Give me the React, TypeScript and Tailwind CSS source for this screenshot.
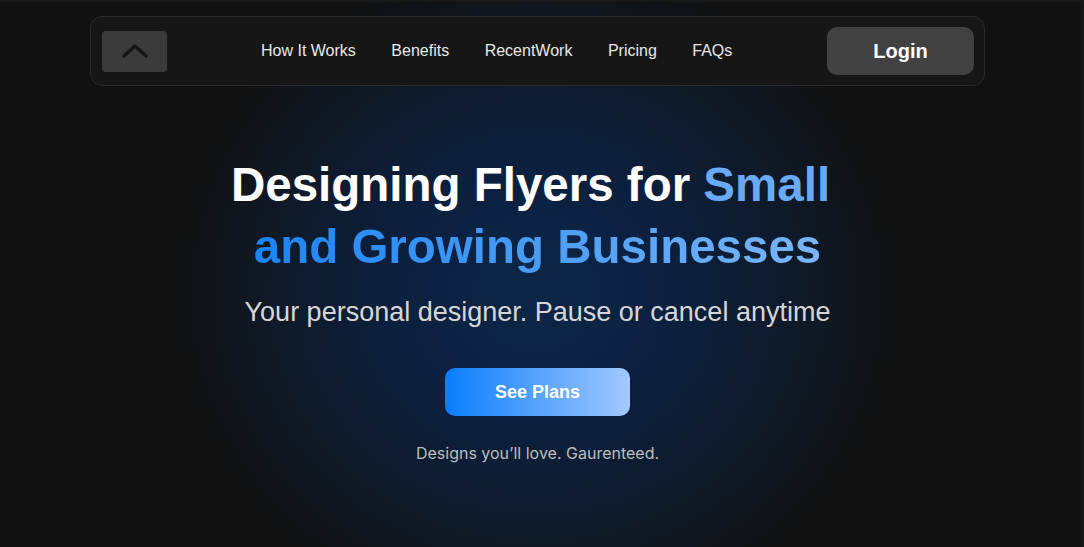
import React from "react";

export default function App() {
  const links = ["How It Works", "Benefits", "RecentWork", "Pricing", "FAQs"];
  return (
    <div
      className="relative w-full h-[547px] overflow-hidden bg-[#111111]"
      style={{ fontFamily: '"Liberation Sans", Arial, sans-serif' }}
    >
      <div className="absolute inset-0 pointer-events-none bg-[radial-gradient(ellipse_370px_340px_at_537px_295px,#0d2748_0%,#0c2040_35%,#0f1a29_70%,#111111_100%)]" />
      <div className="absolute top-0 left-0 right-0 h-[2px] bg-[#1a1a1a]" />
      <div className="absolute top-0 bottom-0 right-0 w-[3px] bg-[#171717]" />
      <div className="relative w-[1075px] flex flex-col items-center">
        <nav className="mt-[16px] w-[895px] h-[70px] rounded-[12px] border border-[#2a2a2a] bg-[#161616] flex items-center pl-[11px] pr-[10px]">
          <div className="w-[65px] h-[41px] rounded-[4px] bg-[#3b3b3b] flex items-center justify-center">
            <svg width="28" height="16" viewBox="0 0 28 16" fill="none">
              <path d="M3 13 L14 3 L25 13" stroke="#161616" strokeWidth="3.5" strokeLinecap="round" strokeLinejoin="round" />
            </svg>
          </div>
          <div className="flex items-center gap-[35.5px] ml-[94px] text-[16px] text-[#e8e8e8]">
            {links.map((l) => (
              <span key={l}>{l}</span>
            ))}
          </div>
          <button className="ml-auto w-[147px] h-[48px] rounded-[10px] bg-[#414141] text-white font-bold text-[20px]">
            Login
          </button>
        </nav>

        <h1 className="mt-[68px] flex flex-col items-center font-bold text-[47.5px] leading-[62px] text-white">
          <span className="pr-[14px]">
            Designing Flyers for <span className="text-[#6aaaf5]">Small</span>
          </span>
          <span className="bg-[linear-gradient(90deg,#1a84f5,#7ab5f7)] bg-clip-text text-transparent">
            and Growing Businesses
          </span>
        </h1>

        <p className="mt-[17px] text-[27px] leading-[35px] text-[#d6d6d6]">
          Your personal designer. Pause or cancel anytime
        </p>

        <button className="mt-[38px] w-[185px] h-[48px] rounded-[10px] bg-[linear-gradient(90deg,#0a7dfc,#a3c9ff)] text-white font-bold text-[18px]">
          See Plans
        </button>

        <p
          className="mt-[25px] text-[16px] text-[#bdbdbd]"
          style={{ fontFamily: "Inter, sans-serif" }}
        >
          Designs you’ll love. Gaurenteed.
        </p>
      </div>
    </div>
  );
}
